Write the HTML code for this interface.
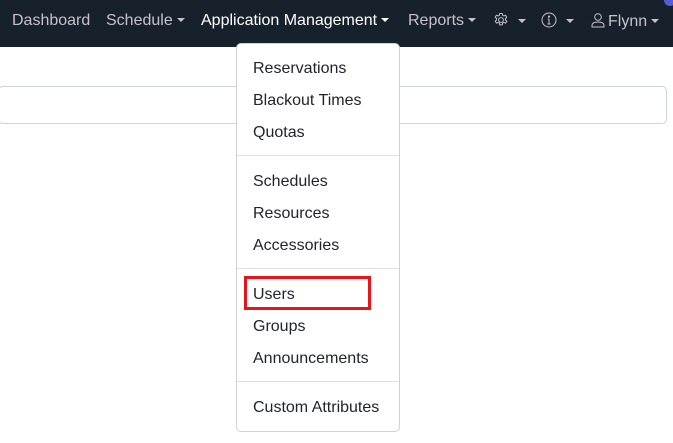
<!DOCTYPE html>
<html><head><style>
body{margin:0;width:673px;height:443px;background:#fff;font-family:"Liberation Sans",sans-serif;position:relative;overflow:hidden}
.nav{position:absolute;left:0;top:0;width:673px;height:47px;background:#17212b}
.nav span{position:absolute;top:12px;font-size:16px;color:#c9c0cf;white-space:nowrap}
.car{display:inline-block;width:0;height:0;border-left:4px solid transparent;border-right:4px solid transparent;border-top:4px solid currentColor;vertical-align:3px;margin-left:4px}
.car2{margin-left:9px}
.box{position:absolute;left:-2px;top:86px;width:667px;height:36px;border:1px solid #ced4da;border-radius:5px}
.dd{position:absolute;left:236px;top:43px;width:162px;height:387px;background:#fff;border:1px solid rgba(0,0,0,.18);border-radius:5px}
.it{position:absolute;left:16px;font-size:16px;color:#212529;white-space:nowrap}
.hr{position:absolute;left:0;width:162px;border-top:1px solid #dee2e6}
.red{position:absolute;left:244px;top:276px;width:121px;height:28px;border:3px solid #e8141b}
</style></head><body>
<div class="nav">
<span style="left:12px">Dashboard</span>
<span style="left:106px">Schedule<i class="car"></i></span>
<span style="left:201px;color:#fff">Application Management<i class="car"></i></span>
<span style="left:408px">Reports<i class="car"></i></span>
<span style="left:493px"><svg width="16" height="16" viewBox="0 0 16 16" style="vertical-align:-2px" fill="none" stroke="#c9c0cf" stroke-width="1"><circle cx="8" cy="8" r="2.4"/><path d="M6.8 1.5h2.4l.4 1.8 1.3.7 1.7-.7 1.2 2-1.4 1.2v1.4l1.4 1.2-1.2 2-1.7-.7-1.3.7-.4 1.8H6.8l-.4-1.8-1.3-.7-1.7.7-1.2-2 1.4-1.2V6.5L2.2 5.3l1.2-2 1.7.7 1.3-.7z"/></svg><i class="car car2"></i></span>
<span style="left:541px"><svg width="16" height="16" viewBox="0 0 16 16" style="vertical-align:-2px" fill="none" stroke="#c9c0cf" stroke-width="1"><circle cx="8" cy="8" r="7"/><path d="M8 7v5M6.5 12h3M6.8 7H8"/><circle cx="8" cy="4.6" r=".6" fill="#c9c0cf"/></svg><i class="car car2"></i></span>
<span style="left:590px"><svg width="16" height="16" viewBox="0 0 16 16" style="vertical-align:-2px;margin-right:2px" fill="none" stroke="#c9c0cf" stroke-width="1"><circle cx="8" cy="5" r="3.3"/><path d="M2 15v-1.5C2 11.5 4 10 8 10s6 1.5 6 3.5V15z"/></svg>Flynn<i class="car"></i></span>
</div>
<div style="position:absolute;left:664px;top:-6px;width:12px;height:12px;border-radius:50%;background:#5b5bd6"></div>
<div class="box"></div>
<div class="dd">
<div class="it" style="top:16px">Reservations</div>
<div class="it" style="top:48px">Blackout Times</div>
<div class="it" style="top:80px">Quotas</div>
<div class="hr" style="top:111px"></div>
<div class="it" style="top:129px">Schedules</div>
<div class="it" style="top:161px">Resources</div>
<div class="it" style="top:193px">Accessories</div>
<div class="hr" style="top:224px"></div>
<div class="it" style="top:242px">Users</div>
<div class="it" style="top:274px">Groups</div>
<div class="it" style="top:306px">Announcements</div>
<div class="hr" style="top:337px"></div>
<div class="it" style="top:355px">Custom Attributes</div>
</div>
<div class="red"></div>
</body></html>
